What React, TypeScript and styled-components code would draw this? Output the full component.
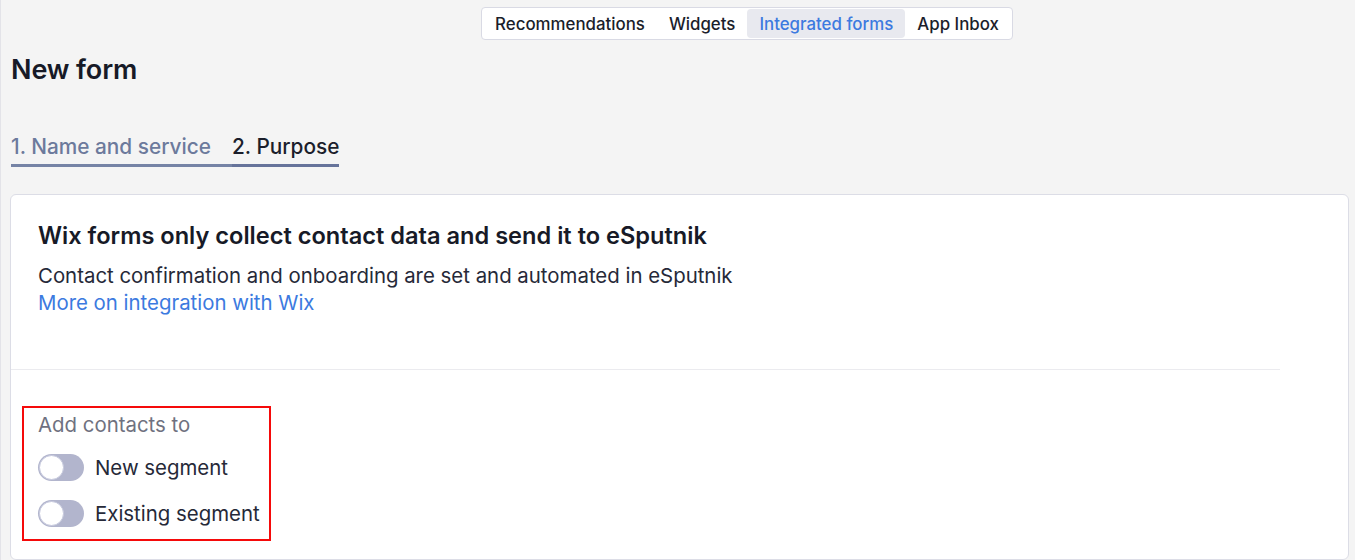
import React from "react";
import styled, { createGlobalStyle } from "styled-components";

const Global = createGlobalStyle`
  html, body { margin: 0; padding: 0; background: #f4f4f4; }
  body {
    font-family: "Inter", "Noto Sans", sans-serif;
    color: #1b1e2b;
    -webkit-font-smoothing: antialiased;
  }
`;

const Page = styled.div`
  height: 560px;
  overflow: hidden;
  border-left: 1px solid #e3e3e8;
  box-sizing: border-box;
  display: flex;
  flex-direction: column;
`;

const Header = styled.header`
  display: flex;
  justify-content: center;
  padding: 7px 0 0 138px;
`;

const TopNav = styled.nav`
  display: flex;
  align-items: center;
  height: 33px;
  box-sizing: border-box;
  padding: 1px;
  background: #ffffff;
  border: 1px solid #d9dae4;
  border-radius: 4px;
`;

const NavItem = styled.span<{ $active?: boolean }>`
  height: 29px;
  display: flex;
  align-items: center;
  padding: 0 12px;
  font-size: 16.85px;
  font-weight: 500;
  border-radius: 4px;
  color: ${(p) => (p.$active ? "#3c7ae0" : "#1b1e2b")};
  background: ${(p) => (p.$active ? "#e8e9ef" : "transparent")};
`;

const Main = styled.main`
  flex: 1;
  display: flex;
  flex-direction: column;
  padding: 0 6px 0 9px;
`;

const Title = styled.h1`
  margin: 14px 0 0 1px;
  font-size: 27px;
  font-weight: 600;
  line-height: 32px;
  letter-spacing: -0.1px;
  color: #171a27;
`;

const Steps = styled.div`
  display: flex;
  margin: 48px 0 0 1px;
  align-self: flex-start;
`;

const Step = styled.div<{ $current?: boolean }>`
  font-size: 20.8px;
  font-weight: 500;
  line-height: 26px;
  padding: 0 ${(p) => (p.$current ? "0" : "21px")} 4px 0;
  color: ${(p) => (p.$current ? "#1b1e2b" : "#6c7a9c")};
  border-bottom: 3px solid ${(p) => (p.$current ? "#66739a" : "#7583a5")};
`;

const Card = styled.section`
  margin-top: 27px;
  flex: 1;
  background: #ffffff;
  border: 1px solid #dcdde6;
  border-radius: 6px;
  display: flex;
  flex-direction: column;
`;

const Intro = styled.div`
  padding: 26px 27px 0;
  width: 1269px;
  height: 175px;
  box-sizing: border-box;
  border-bottom: 1px solid #ebebef;
`;

const CardHeading = styled.h2`
  margin: 0;
  font-size: 23.6px;
  font-weight: 600;
  line-height: 30px;
  color: #171a27;
`;

const Text = styled.p`
  margin: 11px 0 0;
  font-size: 20.4px;
  line-height: 27px;
  color: #262938;
`;

const Link = styled.a`
  display: block;
  font-size: 20.4px;
  line-height: 27px;
  color: #3c7ae0;
  text-decoration: none;
`;

const Options = styled.div`
  padding: 36px 0 0 11px;
`;

const Highlight = styled.div`
  display: inline-flex;
  flex-direction: column;
  gap: 4px;
  padding: 4px 9px 5px 14px;
  border: 2px solid #f50a0a;
`;

const Label = styled.div`
  font-size: 20.4px;
  line-height: 26px;
  color: #6f7180;
  margin-bottom: 4px;
`;

const ToggleRow = styled.label`
  display: flex;
  align-items: center;
  gap: 11px;
  height: 42px;
  font-size: 20.4px;
  color: #262938;
`;

const Track = styled.span`
  position: relative;
  width: 46px;
  height: 27px;
  border-radius: 14px;
  background: #b2b5cd;
  flex-shrink: 0;
`;

const Knob = styled.span`
  position: absolute;
  left: 1px;
  top: 1px;
  width: 23px;
  height: 23px;
  border-radius: 50%;
  background: #ffffff;
  border: 1px solid #c6c9dd;
`;

function Toggle({ label }: { label: string }) {
  return (
    <ToggleRow>
      <Track>
        <Knob />
      </Track>
      {label}
    </ToggleRow>
  );
}

export default function App() {
  return (
    <>
      <Global />
      <Page>
        <Header>
          <TopNav>
            <NavItem>Recommendations</NavItem>
            <NavItem>Widgets</NavItem>
            <NavItem $active>Integrated forms</NavItem>
            <NavItem>App Inbox</NavItem>
          </TopNav>
        </Header>
        <Main>
          <Title>New form</Title>
          <Steps>
            <Step>1. Name and service</Step>
            <Step $current>2. Purpose</Step>
          </Steps>
          <Card>
            <Intro>
              <CardHeading>Wix forms only collect contact data and send it to eSputnik</CardHeading>
              <Text>Contact confirmation and onboarding are set and automated in eSputnik</Text>
              <Link href="#">More on integration with Wix</Link>
            </Intro>
            <Options>
              <Highlight>
                <Label>Add contacts to</Label>
                <Toggle label="New segment" />
                <Toggle label="Existing segment" />
              </Highlight>
            </Options>
          </Card>
        </Main>
      </Page>
    </>
  );
}
